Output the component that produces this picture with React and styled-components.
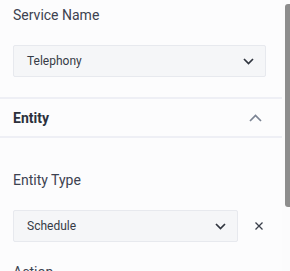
import React from "react"
import styled, { createGlobalStyle } from "styled-components"

const GlobalStyle = createGlobalStyle`
  html, body {
    margin: 0;
    padding: 0;
    height: 100%;
    overflow: hidden;
    background: #fcfcfd;
  }
  * {
    box-sizing: border-box;
  }
`

const Frame = styled.div`
  display: flex;
  height: 271px;
  width: 290px;
  overflow: hidden;
  background: #fcfcfd;
  font-family: Roboto, "Liberation Sans", sans-serif;
  color: #3b404c;
`

const Content = styled.div`
  width: 282px;
  flex-shrink: 0;
  overflow: hidden;
`

const ScrollTrack = styled.div`
  width: 8px;
  padding: 4px 0 0 3px;
  background: #fbfbfc;
`

const Thumb = styled.div`
  width: 5px;
  height: 203px;
  background: #8d8d8d;
  border-radius: 3px 0 0 3px;
`

const Section = styled.div`
  padding: ${(p) => p.$pad || "5px 16px 20px 13px"};
  display: flex;
  flex-direction: column;
  gap: 20px;
`

const Label = styled.div`
  font-size: 14px;
  line-height: 20px;
  color: #3d4250;
`

const Divider = styled.div`
  height: 2px;
  background: #eeeff5;
`

const Header = styled.div`
  height: 37px;
  padding: 0 20px 0 13px;
  display: flex;
  align-items: center;
  justify-content: space-between;
  font-size: 14px;
  font-weight: 700;
  color: #2c313c;
`

const Row = styled.div`
  display: flex;
  align-items: center;
  gap: 17px;
`

const Select = styled.div`
  flex: ${(p) => (p.$grow ? "1 1 auto" : "none")};
  height: 32px;
  display: flex;
  align-items: center;
  justify-content: space-between;
  padding: 0 11px 0 13px;
  background: #f5f6f8;
  border: 1px solid #e7e9ee;
  border-radius: 2px;
  font-size: 12px;
  color: #353b46;
`

const IconBox = styled.span`
  display: flex;
  align-items: center;
  color: ${(p) => p.$color || "#30353f"};
  padding-right: ${(p) => p.$pr || 0}px;
`

const ChevronDown = () => (
  <svg width="11" height="7" viewBox="0 0 11 7" fill="none">
    <path d="M1 1l4.5 4.5L10 1" stroke="currentColor" strokeWidth="1.7" />
  </svg>
)

const ChevronUp = () => (
  <svg width="13" height="8" viewBox="0 0 13 8" fill="none">
    <path d="M1 7l5.5-5.5L12 7" stroke="currentColor" strokeWidth="1.7" />
  </svg>
)

const Close = () => (
  <svg width="8" height="8" viewBox="0 0 8 8" fill="none">
    <path d="M0.5 0.5l7 7M7.5 0.5l-7 7" stroke="currentColor" strokeWidth="1.3" />
  </svg>
)

export default function App() {
  return (
    <>
      <GlobalStyle />
      <Frame>
        <Content>
          <Section>
            <Label>Service Name</Label>
            <Select>
              Telephony
              <IconBox>
                <ChevronDown />
              </IconBox>
            </Select>
          </Section>
          <Divider />
          <Header>
            Entity
            <IconBox $color="#7b8393">
              <ChevronUp />
            </IconBox>
          </Header>
          <Divider />
          <Section $pad="32px 16px 20px 13px">
            <Label>Entity Type</Label>
            <Row>
              <Select $grow>
                Schedule
                <IconBox>
                  <ChevronDown />
                </IconBox>
              </Select>
              <IconBox $color="#3a3f4a" $pr={3}>
                <Close />
              </IconBox>
            </Row>
            <Label>Action</Label>
          </Section>
        </Content>
        <ScrollTrack>
          <Thumb />
        </ScrollTrack>
      </Frame>
    </>
  )
}
